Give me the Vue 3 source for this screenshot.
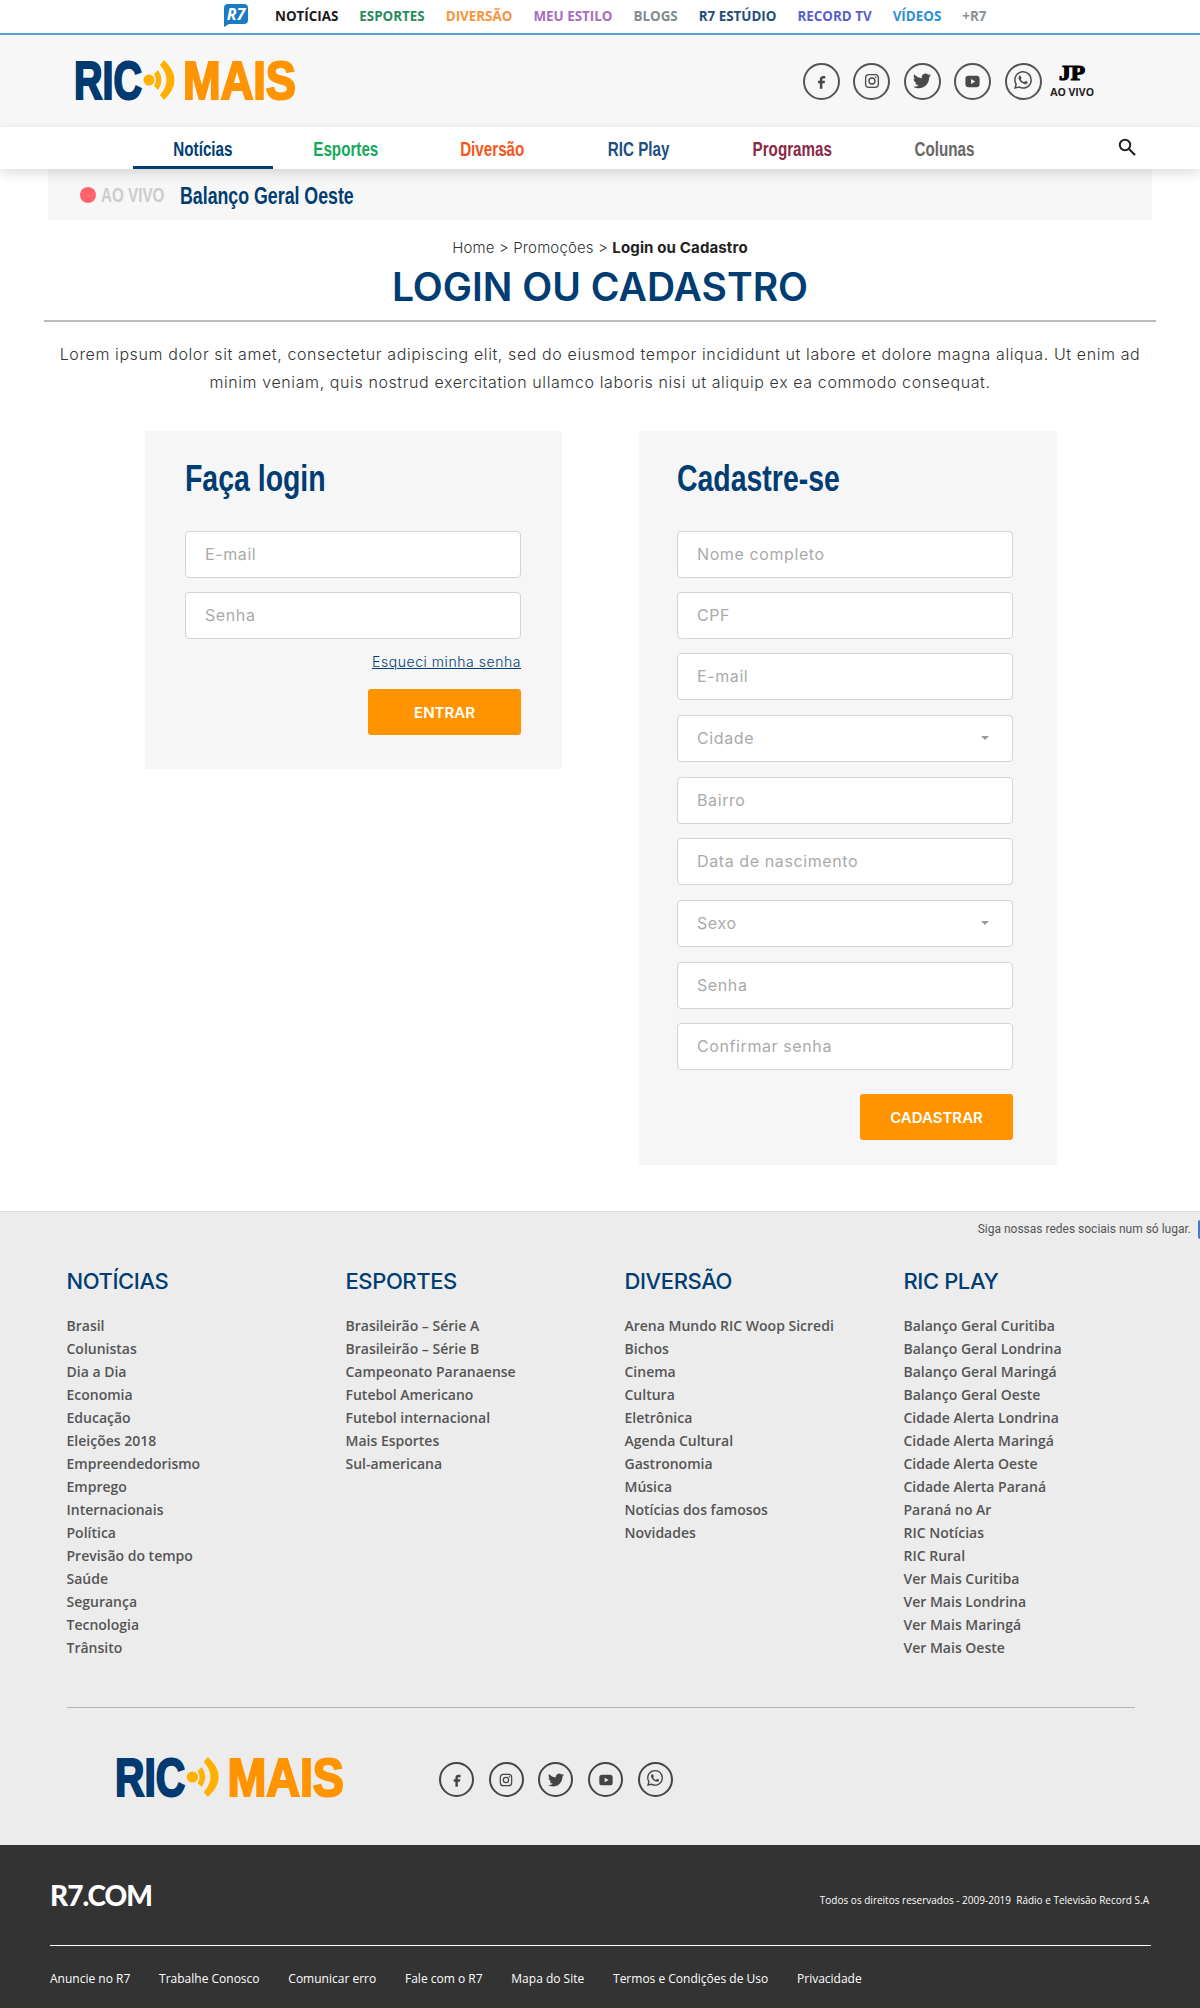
<script setup>
const topLinks = [
  { label: 'NOTÍCIAS', color: '#1b1b1b' },
  { label: 'ESPORTES', color: '#2b8a5e' },
  { label: 'DIVERSÃO', color: '#f8943c' },
  { label: 'MEU ESTILO', color: '#a86cc1' },
  { label: 'BLOGS', color: '#7f8c8d' },
  { label: 'R7 ESTÚDIO', color: '#1f4e79' },
  { label: 'RECORD TV', color: '#5b5fc7' },
  { label: 'VÍDEOS', color: '#2f8fd8' },
  { label: '+R7', color: '#8a8f94' }
]

const navLinks = [
  { label: 'Notícias', color: '#003d73', largura: 140, ativo: true },
  { label: 'Esportes', color: '#16a85a', largura: 146 },
  { label: 'Diversão', color: '#f4581c', largura: 147 },
  { label: 'RIC Play', color: '#1d4f80', largura: 146 },
  { label: 'Programas', color: '#8a2846', largura: 161 },
  { label: 'Colunas', color: '#666', largura: 142 }
]

const redes = ['facebook', 'instagram', 'twitter', 'youtube', 'whatsapp']

const colunas = [
  { titulo: 'NOTÍCIAS', itens: ['Brasil', 'Colunistas', 'Dia a Dia', 'Economia', 'Educação', 'Eleições 2018', 'Empreendedorismo', 'Emprego', 'Internacionais', 'Política', 'Previsão do tempo', 'Saúde', 'Segurança', 'Tecnologia', 'Trânsito'] },
  { titulo: 'ESPORTES', itens: ['Brasileirão – Série A', 'Brasileirão – Série B', 'Campeonato Paranaense', 'Futebol Americano', 'Futebol internacional', 'Mais Esportes', 'Sul-americana'] },
  { titulo: 'DIVERSÃO', itens: ['Arena Mundo RIC Woop Sicredi', 'Bichos', 'Cinema', 'Cultura', 'Eletrônica', 'Agenda Cultural', 'Gastronomia', 'Música', 'Notícias dos famosos', 'Novidades'] },
  { titulo: 'RIC PLAY', itens: ['Balanço Geral Curitiba', 'Balanço Geral Londrina', 'Balanço Geral Maringá', 'Balanço Geral Oeste', 'Cidade Alerta Londrina', 'Cidade Alerta Maringá', 'Cidade Alerta Oeste', 'Cidade Alerta Paraná', 'Paraná no Ar', 'RIC Notícias', 'RIC Rural', 'Ver Mais Curitiba', 'Ver Mais Londrina', 'Ver Mais Maringá', 'Ver Mais Oeste'] }
]

const linksR7 = ['Anuncie no R7', 'Trabalhe Conosco', 'Comunicar erro', 'Fale com o R7', 'Mapa do Site', 'Termos e Condições de Uso', 'Privacidade']

const camposCadastro = [
  { nome: 'Nome completo' },
  { nome: 'CPF' },
  { nome: 'E-mail' },
  { nome: 'Cidade', select: true },
  { nome: 'Bairro' },
  { nome: 'Data de nascimento' },
  { nome: 'Sexo', select: true },
  { nome: 'Senha' },
  { nome: 'Confirmar senha' }
]
</script>

<template>
  <svg class="defs" width="0" height="0">
    <symbol id="ondas" viewBox="0 0 224 40">
      <circle cx="76" cy="20" r="5.5" fill="#ffb000" />
      <path d="M85 10 q7 10 0 20 l-4 -4 q4 -6 0 -12z" fill="#ffb000" />
      <path d="M91 0 q21 20 0 40 l-4 -5 q13 -15 0 -30z" fill="#ffb000" />
    </symbol>
    <symbol id="ic-facebook" viewBox="0 0 24 24">
      <path d="M14.2 8.2h2.6V5h-2.7c-2.7 0-4.2 1.6-4.2 4.1v2H7.6v3.1h2.3V21h3.2v-6.8h2.8l.5-3.1h-3.3V9.4c0-.8.4-1.2 1.1-1.2z" fill="currentColor" />
    </symbol>
    <symbol id="ic-instagram" viewBox="0 0 24 24">
      <rect x="3.5" y="3.5" width="17" height="17" rx="4.5" fill="none" stroke="currentColor" stroke-width="1.8" />
      <circle cx="12" cy="12" r="4" fill="none" stroke="currentColor" stroke-width="1.8" />
      <circle cx="17" cy="7" r="1.1" fill="currentColor" />
    </symbol>
    <symbol id="ic-twitter" viewBox="0 0 24 24">
      <path d="M23.953 4.57a10 10 0 01-2.825.775 4.958 4.958 0 002.163-2.723c-.951.555-2.005.959-3.127 1.184a4.92 4.92 0 00-8.384 4.482C7.69 8.095 4.067 6.13 1.64 3.162a4.822 4.822 0 00-.666 2.475c0 1.71.87 3.213 2.188 4.096a4.904 4.904 0 01-2.228-.616v.06a4.923 4.923 0 003.946 4.827 4.996 4.996 0 01-2.212.085 4.936 4.936 0 004.604 3.417 9.867 9.867 0 01-6.102 2.105c-.39 0-.779-.023-1.17-.067a13.995 13.995 0 007.557 2.209c9.053 0 13.998-7.496 13.998-13.985 0-.21 0-.42-.015-.63A9.935 9.935 0 0024 4.59z" fill="currentColor" />
    </symbol>
    <symbol id="ic-youtube" viewBox="0 0 24 24">
      <path fill-rule="evenodd" d="M6 4h12a4 4 0 014 4v8a4 4 0 01-4 4H6a4 4 0 01-4-4V8a4 4 0 014-4zm4 4.5v7l6-3.5z" fill="currentColor" />
    </symbol>
    <symbol id="ic-whatsapp" viewBox="0 0 24 24">
      <path d="M17.472 14.382c-.297-.149-1.758-.867-2.03-.967-.273-.099-.471-.148-.67.15-.197.297-.767.966-.94 1.164-.173.199-.347.223-.644.075-.297-.15-1.255-.463-2.39-1.475-.883-.788-1.48-1.761-1.653-2.059-.173-.297-.018-.458.13-.606.134-.133.298-.347.446-.52.149-.174.198-.298.298-.497.099-.198.05-.371-.025-.52-.075-.149-.669-1.612-.916-2.207-.242-.579-.487-.5-.669-.51-.173-.008-.371-.01-.57-.01-.198 0-.52.074-.792.372-.272.297-1.04 1.016-1.04 2.479 0 1.462 1.065 2.875 1.213 3.074.149.198 2.096 3.2 5.077 4.487.709.306 1.262.489 1.694.625.712.227 1.36.195 1.871.118.571-.085 1.758-.719 2.006-1.413.248-.694.248-1.289.173-1.413-.074-.124-.272-.198-.57-.347m-5.421 7.403h-.004a9.87 9.87 0 01-5.031-1.378l-.361-.214-3.741.982.998-3.648-.235-.374a9.86 9.86 0 01-1.51-5.26c.001-5.45 4.436-9.884 9.888-9.884 2.64 0 5.122 1.03 6.988 2.898a9.825 9.825 0 012.893 6.994c-.003 5.45-4.437 9.884-9.885 9.884m8.413-18.297A11.815 11.815 0 0012.05 0C5.495 0 .16 5.335.157 11.892c0 2.096.547 4.142 1.588 5.945L.057 24l6.305-1.654a11.882 11.882 0 005.683 1.448h.005c6.554 0 11.89-5.335 11.893-11.893a11.821 11.821 0 00-3.48-8.413z" fill="currentColor" />
    </symbol>
  </svg>

  <div class="page">
    <div class="topbar">
      <svg class="r7-logo" width="24" height="23" viewBox="0 0 24 23">
        <path d="M4 0h16a4 4 0 014 4v12a4 4 0 01-4 4H5l-5 3V4a4 4 0 014-4z" fill="#1a7ac4" />
        <text x="12" y="15.5" text-anchor="middle" class="r7-txt">R7</text>
      </svg>
      <a v-for="l in topLinks" :key="l.label" class="top-link" :style="{ color: l.color }">{{ l.label }}</a>
    </div>

    <header class="header">
      <svg class="logo" width="224" height="40" viewBox="0 0 224 40">
        <text x="1" y="39" class="logo-txt" fill="#003a70" stroke="#003a70" textLength="68" lengthAdjust="spacingAndGlyphs">RIC</text>
        <use href="#ondas" />
        <text x="110" y="39" class="logo-txt" fill="#ff9400" stroke="#ff9400" textLength="113" lengthAdjust="spacingAndGlyphs">MAIS</text>
      </svg>
      <div class="header-redes">
        <a v-for="r in redes" :key="r" class="rede">
          <svg :class="'ic-' + r"><use :href="'#ic-' + r" /></svg>
        </a>
        <div class="jp">
          <svg width="26" height="16" viewBox="0 0 26 16">
            <text x="0" y="15.5" class="jp-txt" textLength="26" lengthAdjust="spacingAndGlyphs">JP</text>
          </svg>
          <span>AO VIVO</span>
        </div>
      </div>
    </header>

    <nav class="nav">
      <a
        v-for="n in navLinks"
        :key="n.label"
        class="nav-link"
        :class="{ ativo: n.ativo }"
        :style="{ color: n.color, width: n.largura + 'px' }"
      ><span>{{ n.label }}</span></a>
      <svg class="busca" width="20" height="20" viewBox="0 0 20 20">
        <circle cx="8" cy="8" r="5.2" fill="none" stroke="#222" stroke-width="2" />
        <path d="M12 12l6 6" stroke="#222" stroke-width="2.2" />
      </svg>
    </nav>

    <div class="live">
      <span class="live-dot"></span>
      <span class="live-tag">AO VIVO</span>
      <span class="live-nome">Balanço Geral Oeste</span>
    </div>

    <main class="main">
      <p class="breadcrumb">Home &gt; Promoções &gt; <b>Login ou Cadastro</b></p>
      <h1 class="titulo">LOGIN OU CADASTRO</h1>
      <p class="intro">
        Lorem ipsum dolor sit amet, consectetur adipiscing elit, sed do eiusmod tempor incididunt ut labore et dolore magna aliqua. Ut enim ad<br />
        minim veniam, quis nostrud exercitation ullamco laboris nisi ut aliquip ex ea commodo consequat.
      </p>

      <div class="paineis">
        <form class="painel painel-login">
          <h2><span>Faça login</span></h2>
          <div class="campos">
            <input class="campo" placeholder="E-mail" />
            <input class="campo" placeholder="Senha" />
          </div>
          <a class="esqueci">Esqueci minha senha</a>
          <button type="button" class="btn btn-entrar">ENTRAR</button>
        </form>

        <form class="painel painel-cadastro">
          <h2><span>Cadastre-se</span></h2>
          <div class="campos">
            <template v-for="c in camposCadastro" :key="c.nome">
              <div v-if="c.select" class="campo campo-select">
                {{ c.nome }}
                <span class="seta"></span>
              </div>
              <input v-else class="campo" :placeholder="c.nome" />
            </template>
          </div>
          <button type="button" class="btn btn-cadastrar">CADASTRAR</button>
        </form>
      </div>
    </main>

    <footer class="rodape">
      <div class="siga">
        <span>Siga nossas redes sociais num só lugar.</span>
        <i class="siga-btn"></i>
      </div>
      <div class="colunas">
        <div v-for="col in colunas" :key="col.titulo" class="coluna">
          <h3>{{ col.titulo }}</h3>
          <a v-for="item in col.itens" :key="item">{{ item }}</a>
        </div>
      </div>
      <div class="rodape-marca">
        <svg class="logo-rodape" width="231" height="40" viewBox="0 0 224 40" preserveAspectRatio="none">
          <text x="1" y="39" class="logo-txt" fill="#003a70" stroke="#003a70" textLength="68" lengthAdjust="spacingAndGlyphs">RIC</text>
          <use href="#ondas" />
          <text x="110" y="39" class="logo-txt" fill="#ff9400" stroke="#ff9400" textLength="113" lengthAdjust="spacingAndGlyphs">MAIS</text>
        </svg>
        <div class="rodape-redes">
          <a v-for="r in redes" :key="r" class="rede rede-peq">
            <svg :class="'ic-' + r"><use :href="'#ic-' + r" /></svg>
          </a>
        </div>
      </div>
    </footer>

    <div class="r7-bar">
      <div class="r7-topo">
        <span class="r7-com">R7.COM</span>
        <span class="direitos">Todos os direitos reservados - 2009-2019&nbsp; Rádio e Televisão Record S.A</span>
      </div>
      <div class="r7-links">
        <a v-for="l in linksR7" :key="l">{{ l }}</a>
      </div>
    </div>
  </div>
</template>

<style>
body { margin: 0; background: #fff; }
</style>

<style scoped>
.defs { position: absolute; }
.page { width: 1200px; height: 2008px; overflow: hidden; font-family: "Inter", "Open Sans", sans-serif; }
a { text-decoration: none; }

.topbar {
  display: flex;
  align-items: center;
  gap: 21px;
  height: 31px;
  padding: 0 0 2px 224px;
  background: #fff;
  border-bottom: 2px solid #5a9fd4;
}
.r7-logo { margin-right: 6px; }
.r7-txt { font: italic 700 16px "Open Sans", sans-serif; fill: #fff; }
.top-link { font: 700 13.4px "Open Sans", sans-serif; }

.header {
  display: flex;
  align-items: center;
  justify-content: space-between;
  height: 92px;
  padding: 0 106px 0 73px;
  background: #f7f7f7;
  box-sizing: border-box;
}
.logo { display: block; margin-top: -2px; overflow: visible; }
.logo-txt { font: 700 53px "Liberation Sans", sans-serif; stroke-width: 2.2px; }
.header-redes { display: flex; align-items: center; gap: 13.5px; }
.rede {
  display: flex;
  align-items: center;
  justify-content: center;
  width: 37px;
  height: 37px;
  box-sizing: border-box;
  border: 2px solid #555;
  border-radius: 50%;
  color: #4a4a4a;
}
.rede svg { width: 18px; height: 18px; }
.rede .ic-facebook { width: 19px; height: 19px; }
.rede .ic-youtube { width: 17px; height: 17px; }
.rede .ic-whatsapp { margin-top: -3px; }
.jp { display: flex; flex-direction: column; align-items: center; gap: 5px; margin-left: -5px; }
.jp svg { display: block; overflow: visible; }
.jp-txt { font: 700 22px "Liberation Serif", serif; fill: #000; stroke: #000; stroke-width: 1.2px; }
.jp span { font: 700 10.5px "Open Sans", sans-serif; color: #222; }

.nav {
  position: relative;
  z-index: 2;
  display: flex;
  height: 42px;
  padding-left: 133px;
  background: #fff;
  box-shadow: 0 4px 12px rgba(0, 0, 0, 0.14);
}
.nav-link {
  display: flex;
  align-items: center;
  justify-content: center;
  padding-top: 2px;
  box-sizing: border-box;
  font: 700 20px "Liberation Sans", sans-serif;
  white-space: nowrap;
}
.nav-link span { display: inline-block; transform: scaleX(0.76); }
.nav-link.ativo { box-shadow: inset 0 -3px 0 #003d73; }
.busca { position: absolute; left: 1117px; top: 10px; }

.live {
  display: flex;
  align-items: center;
  height: 51px;
  margin: 0 48px;
  padding: 2px 0 0 32px;
  box-sizing: border-box;
  background: #f7f7f7;
  font-family: "Liberation Sans", sans-serif;
  font-weight: 700;
  white-space: nowrap;
}
.live-dot { width: 16px; height: 16px; border-radius: 50%; background: #ff646c; margin: -2px 5px 0 0; }
.live-tag { width: 79px; font-size: 20px; color: #ccc; transform: scaleX(0.76); transform-origin: left; }
.live-nome { font-size: 24px; color: #003d73; transform: scaleX(0.74); transform-origin: left; }

.main { padding-top: 18px; text-align: center; color: #333; }
.breadcrumb { margin: 0; height: 20px; line-height: 20px; font-size: 15px; letter-spacing: 0.14px; color: #333; font-weight: 300; }
.breadcrumb b { font-weight: 700; color: #222; }
.titulo {
  margin: 0 44px;
  padding: 7px 0 12px;
  height: 43px;
  line-height: 43px;
  border-bottom: 2px solid #bbb;
  font-size: 39px;
  font-weight: 600;
  color: #003d73;
}
.intro { margin: 18px 0 0; font-size: 16px; font-weight: 300; letter-spacing: 0.6px; line-height: 28px; color: #333; }

.paineis { display: flex; gap: 77px; padding: 35px 0 0 145px; align-items: flex-start; text-align: left; }
.painel { box-sizing: border-box; background: #f6f6f6; display: flex; flex-direction: column; }
.painel h2 {
  margin: 0;
  height: 62px;
  font: 700 36px/62px "Liberation Sans", sans-serif;
  color: #003d73;
}
.painel h2 span { display: inline-block; transform: scaleX(0.79); transform-origin: left; white-space: nowrap; }
.painel-login { width: 417px; height: 338px; padding: 17px 41px 0 40px; }
.painel-cadastro { width: 418px; height: 734px; padding: 17px 44px 0 38px; }
.campos { display: flex; flex-direction: column; gap: 14px; margin-top: 21px; }
.campo {
  display: block;
  width: 336px;
  height: 47px;
  box-sizing: border-box;
  padding: 0 19px 2px;
  background: #fff;
  border: 1px solid #d4d4d4;
  border-radius: 4px;
  font: 400 16px "Inter", sans-serif;
  letter-spacing: 0.6px;
  color: #aaa;
  outline: none;
}
.campo::placeholder { color: #aaa; opacity: 1; }
.campo-select { display: flex; align-items: center; justify-content: space-between; margin: 1px 0; }
.seta { width: 0; height: 0; margin-right: 4px; border: 4px solid transparent; border-top: 4px solid #999; margin-top: 5px; }
.esqueci {
  align-self: flex-end;
  margin-top: 14px;
  font-size: 14px;
  letter-spacing: 0.55px;
  line-height: 18px;
  font-weight: 300;
  color: #003d73;
  text-decoration: underline;
}
.btn {
  align-self: flex-end;
  width: 153px;
  height: 46px;
  border: 0;
  border-radius: 3px;
  background: #ff9400;
  color: #fff;
  font: 600 15px "Inter", sans-serif;
}
.btn-entrar { margin-top: 18px; }
.btn-cadastrar { margin-top: 24px; }

.rodape {
  position: absolute;
  top: 1211px;
  left: 0;
  width: 1200px;
  height: 634px;
  box-sizing: border-box;
  background: #ececec;
  border-top: 1px solid #ddd;
}
.siga {
  display: flex;
  justify-content: flex-end;
  align-items: center;
  gap: 7px;
  height: 34px;
  font: 12px "Roboto", sans-serif;
  color: #555;
}
.siga-btn { width: 2px; height: 19px; background: #4a76c8; border-radius: 2px 0 0 2px; }
.colunas { display: grid; grid-template-columns: repeat(4, 279px); padding: 18px 0 0 66.5px; height: 430px; box-sizing: border-box; }
.coluna { display: flex; flex-direction: column; }
.coluna h3 { margin: 0 0 16px; height: 34px; line-height: 34px; font-size: 22px; font-weight: 500; color: #003d73; letter-spacing: -0.4px; }
.coluna a { height: 23px; font: 600 14px/23px "Open Sans", sans-serif; color: #555; }
.rodape-marca {
  display: flex;
  align-items: center;
  margin: 31px 65px 0 67px;
  padding: 48px 0 0 47px;
  border-top: 1px solid #b5b5b5;
}
.logo-rodape { display: block; overflow: visible; }
.rodape-redes { display: flex; gap: 14.7px; margin-left: 94px; margin-top: 6px; }
.rede-peq { width: 35px; height: 35px; color: #444; border-color: #444; }
.rede-peq svg { width: 16px; height: 16px; }
.rede-peq .ic-facebook { width: 18px; height: 18px; }
.rede-peq .ic-youtube { width: 16px; height: 16px; }
.rede-peq .ic-whatsapp { margin-top: -4px; }

.r7-bar {
  position: absolute;
  top: 1845px;
  left: 0;
  width: 1200px;
  height: 163px;
  box-sizing: border-box;
  padding: 0 49px 0 50px;
  background: #333;
  color: #fff;
}
.r7-topo { display: flex; align-items: center; justify-content: space-between; height: 100px; border-bottom: 1px solid #fff; }
.r7-com { font: 900 28px "Lato", sans-serif; letter-spacing: -1px; }
.direitos { font: 10px "Open Sans", sans-serif; margin: 10px 2px 0 0; }
.r7-links { display: flex; gap: 28.8px; padding-top: 24px; }
.r7-links a { font: 12px "Open Sans", sans-serif; color: #fff; }
</style>
